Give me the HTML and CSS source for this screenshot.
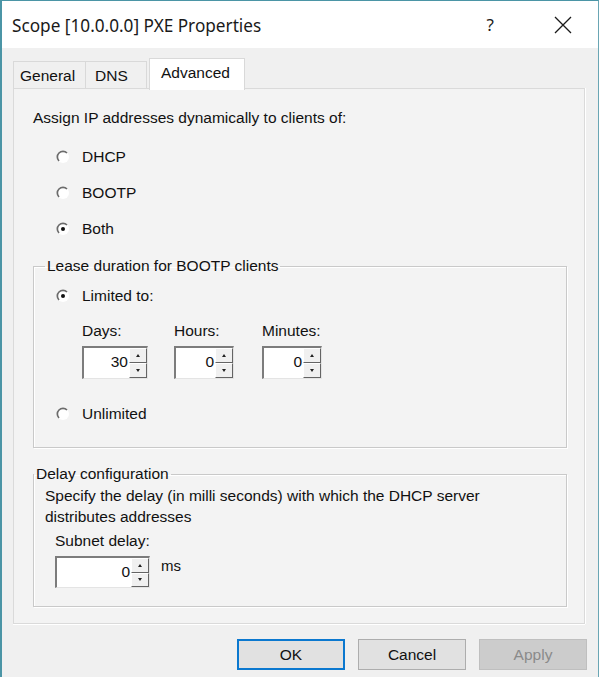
FILE: index.html
```html
<!DOCTYPE html>
<html lang="en">
<head>
    <meta charset="UTF-8">
    <title>Scope [10.0.0.0] PXE Properties</title>
    <link rel="stylesheet" href="styles.css">
</head>
<body>
    <div class="window">
        <div class="titlebar">
            <span class="title">Scope [10.0.0.0] PXE Properties</span>
            <span class="help">?</span>
            <svg class="close" width="18" height="18" viewBox="0 0 18 18">
                <path d="M1 1 L17 17 M17 1 L1 17" stroke="#1a1a1a" stroke-width="1.3" fill="none"/>
            </svg>
        </div>

        <div class="dialog">
            <div class="tabs">
                <div class="tab">General</div>
                <div class="tab">DNS</div>
                <div class="tab active">Advanced</div>
            </div>

            <div class="panel">
                <div class="line">Assign IP addresses dynamically to clients of:</div>
                <div class="radios">
                    <div class="radio">
                        <svg width="14" height="14" viewBox="0 0 14 14"><circle cx="7" cy="7" r="6" fill="#fff"/><path d="M11 3 A5.6 5.6 0 0 0 3 11" stroke="#6b6b6b" stroke-width="1.7" fill="none"/></svg>
                        <span>DHCP</span>
                    </div>
                    <div class="radio">
                        <svg width="14" height="14" viewBox="0 0 14 14"><circle cx="7" cy="7" r="6" fill="#fff"/><path d="M11 3 A5.6 5.6 0 0 0 3 11" stroke="#6b6b6b" stroke-width="1.7" fill="none"/></svg>
                        <span>BOOTP</span>
                    </div>
                    <div class="radio">
                        <svg width="14" height="14" viewBox="0 0 14 14"><circle cx="7" cy="7" r="6" fill="#fff"/><path d="M11 3 A5.6 5.6 0 0 0 3 11" stroke="#6b6b6b" stroke-width="1.7" fill="none"/><circle cx="7" cy="7" r="2" fill="#111"/></svg>
                        <span>Both</span>
                    </div>
                </div>

                <fieldset class="group lease">
                    <legend>Lease duration for BOOTP clients</legend>
                    <div class="radio">
                        <svg width="14" height="14" viewBox="0 0 14 14"><circle cx="7" cy="7" r="6" fill="#fff"/><path d="M11 3 A5.6 5.6 0 0 0 3 11" stroke="#6b6b6b" stroke-width="1.7" fill="none"/><circle cx="7" cy="7" r="2" fill="#111"/></svg>
                        <span>Limited to:</span>
                    </div>
                    <div class="fields">
                        <div class="field">
                            <div class="lbl">Days:</div>
                            <div class="spin days">
                                <div class="val">30</div>
                                <div class="arrows"><div class="arr"><i class="up"></i></div><div class="arr"><i class="down"></i></div></div>
                            </div>
                        </div>
                        <div class="field">
                            <div class="lbl">Hours:</div>
                            <div class="spin">
                                <div class="val">0</div>
                                <div class="arrows"><div class="arr"><i class="up"></i></div><div class="arr"><i class="down"></i></div></div>
                            </div>
                        </div>
                        <div class="field">
                            <div class="lbl">Minutes:</div>
                            <div class="spin">
                                <div class="val">0</div>
                                <div class="arrows"><div class="arr"><i class="up"></i></div><div class="arr"><i class="down"></i></div></div>
                            </div>
                        </div>
                    </div>
                    <div class="radio unlimited">
                        <svg width="14" height="14" viewBox="0 0 14 14"><circle cx="7" cy="7" r="6" fill="#fff"/><path d="M11 3 A5.6 5.6 0 0 0 3 11" stroke="#6b6b6b" stroke-width="1.7" fill="none"/></svg>
                        <span>Unlimited</span>
                    </div>
                </fieldset>

                <fieldset class="group delay">
                    <legend>Delay configuration</legend>
                    <div class="desc">Specify the delay (in milli seconds) with which the DHCP server<br>distributes addresses</div>
                    <div class="subnet">
                        <div class="lbl">Subnet delay:</div>
                        <div class="subnet-row">
                            <div class="spin wide">
                                <div class="val">0</div>
                                <div class="arrows"><div class="arr"><i class="up"></i></div><div class="arr"><i class="down"></i></div></div>
                            </div>
                            <span class="ms">ms</span>
                        </div>
                    </div>
                </fieldset>
            </div>

            <div class="buttons">
                <button class="btn default">OK</button>
                <button class="btn">Cancel</button>
                <button class="btn disabled">Apply</button>
            </div>
        </div>
    </div>
</body>
</html>
```

FILE: styles.css
```css
body {
    margin: 0;
    padding: 0;
    background: #fff;
    font-family: 'Liberation Sans', Arial, sans-serif;
    font-size: 15.5px;
    color: #111;
}

.window {
    width: 596px;
    height: 676px;
    border-top: 1px solid #4b95a6;
    border-left: 2px solid #4b95a6;
    border-right: 1px solid #6aa6b4;
    background: #f0f0f0;
    display: flex;
    flex-direction: column;
}

.titlebar {
    height: 47px;
    background: #fff;
    display: flex;
    align-items: center;
    padding-left: 10px;
}

.title {
    font-family: 'Noto Sans', 'Open Sans', sans-serif;
    font-size: 17.2px;
    color: #1a1a1a;
    flex: 1;
    padding-top: 2px;
}

.help {
    font-family: 'Noto Sans', sans-serif;
    font-size: 17px;
    color: #1a1a1a;
    margin-right: 60px;
}

.close {
    margin-right: 26px;
}

.dialog {
    flex: 1;
    padding: 10px 9px 0 11px;
}

.tabs {
    display: flex;
    align-items: flex-end;
    height: 30px;
}

.tab {
    height: 27px;
    line-height: 27px;
    padding: 0 6px;
    background: #f0f0f0;
    border: 1px solid #d9d9d9;
    border-bottom: none;
    box-sizing: border-box;
    width: 73px;
}

.tab + .tab {
    width: 61px;
    border-left: none;
    padding-left: 9px;
}

.tab.active {
    width: 96px;
    height: 32px;
    line-height: 28px;
    margin-left: 2px;
    background: #fff;
    border-left: 1px solid #d9d9d9;
    padding-left: 11px;
    margin-bottom: -2px;
    position: relative;
}

.panel {
    width: 572px;
    box-sizing: border-box;
    border: 1px solid #dadada;
    box-shadow: 0 1px 0 #fff, 1px 0 0 #fff;
    background: #f3f3f3;
    padding: 19px 17px 16px 19px;
}

.line {
    line-height: 20px;
}

.radios {
    margin-top: 11px;
    margin-left: 23px;
}

.radios .radio {
    height: 36px;
}

.radio {
    display: flex;
    align-items: center;
    gap: 12px;
    height: 24px;
}

.radio svg {
    flex: none;
}

.group {
    margin: 9px 0 0 0;
    padding: 0 12px 0 22px;
    border: 1px solid #c9c9c9;
    box-shadow: inset 1px 1px 0 #fff, 1px 1px 0 #fff;
    min-width: 0;
}

.group legend {
    padding: 0 2px;
    margin-left: -11px;
    line-height: 20px;
}

.lease {
    height: 192px;
    box-sizing: border-box;
    padding-top: 8px;
}

.fields {
    display: grid;
    grid-template-columns: 92px 88px 60px;
    margin-left: 26px;
    margin-top: 13px;
}

.lbl {
    line-height: 20px;
    margin-bottom: 5px;
}

.spin {
    display: flex;
    width: 60px;
    height: 33px;
    box-sizing: border-box;
    background: #fff;
    border-top: 2px solid #7c7c7c;
    border-left: 2px solid #7c7c7c;
    border-right: 1px solid #e4e4e4;
    border-bottom: 1px solid #e4e4e4;
}

.spin.days {
    width: 66px;
}

.spin.wide {
    width: 95px;
    height: 32px;
}

.val {
    flex: 1;
    text-align: right;
    line-height: 28px;
    padding-right: 1px;
}

.arrows {
    width: 18px;
    display: flex;
    flex-direction: column;
}

.arr {
    flex: 1;
    background: #f0f0f0;
    border-top: 1px solid #fff;
    border-left: 1px solid #fff;
    border-right: 1px solid #646464;
    border-bottom: 1px solid #646464;
    display: flex;
    align-items: center;
    justify-content: center;
}

.arr i {
    width: 0;
    height: 0;
    border-left: 2px solid transparent;
    border-right: 2px solid transparent;
}

.arr .up {
    border-bottom: 3px solid #222;
}

.arr .down {
    border-top: 3px solid #222;
}

.unlimited {
    margin-top: 23px;
}

.delay {
    margin-top: 16px;
    padding: 1px 12px 18px 11px;
}

.desc {
    line-height: 21px;
}

.subnet {
    margin-top: 4px;
    margin-left: 10px;
}

.subnet-row {
    display: flex;
    align-items: flex-start;
    gap: 11px;
}

.ms {
    line-height: 20px;
    font-size: 15px;
}

.buttons {
    display: flex;
    justify-content: flex-end;
    gap: 13px;
    margin-top: 15px;
    margin-right: 2px;
}

.btn {
    width: 108px;
    height: 31px;
    font-family: 'Liberation Sans', Arial, sans-serif;
    font-size: 15.5px;
    color: #111;
    background: #e1e1e1;
    border: 1px solid #adadad;
    padding: 0;
}

.btn.default {
    border: 2px solid #0b78cf;
}

.btn.disabled {
    background: #cccccc;
    border-color: #bfbfbf;
    color: #8a8a8a;
}
```
